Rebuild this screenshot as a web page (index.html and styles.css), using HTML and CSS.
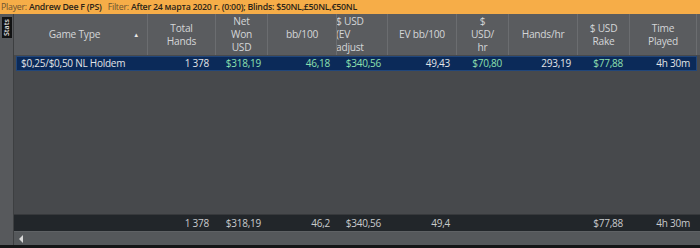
FILE: index.html
```html
<!DOCTYPE html>
<html lang="en">
<head>
    <meta charset="UTF-8">
    <title>Stats</title>
    <link rel="stylesheet" href="styles.css">
</head>
<body>
    <div class="topbar">
        <span class="label">Player:</span> <b>Andrew Dee F (PS)</b>
        <span class="label gap">Filter:</span> <b>After 24 марта 2020 г. (0:00); Blinds: $50NL,£50NL,€50NL</b>
    </div>

    <div class="main">
        <div class="side">
            <div class="tab">Stats</div>
        </div>

        <div class="grid">
            <div class="row head">
                <div class="cell first">Game Type <span class="sort">&#9650;</span></div>
                <div class="cell">Total<br>Hands</div>
                <div class="cell">Net<br>Won<br>USD</div>
                <div class="cell">bb/100</div>
                <div class="cell clip"><span>$ USD<br>(EV<br>adjust</span></div>
                <div class="cell">EV bb/100</div>
                <div class="cell">$<br>USD/<br>hr</div>
                <div class="cell">Hands/hr</div>
                <div class="cell">$ USD<br>Rake</div>
                <div class="cell">Time<br>Played</div>
            </div>

            <div class="body">
                <div class="row data selected">
                    <div class="cell first">$0,25/$0,50 NL Holdem</div>
                    <div class="cell">1 378</div>
                    <div class="cell green">$318,19</div>
                    <div class="cell green">46,18</div>
                    <div class="cell green">$340,56</div>
                    <div class="cell">49,43</div>
                    <div class="cell green">$70,80</div>
                    <div class="cell">293,19</div>
                    <div class="cell green">$77,88</div>
                    <div class="cell">4h 30m</div>
                </div>
            </div>

            <div class="row data total">
                <div class="cell first"></div>
                <div class="cell">1 378</div>
                <div class="cell">$318,19</div>
                <div class="cell">46,2</div>
                <div class="cell">$340,56</div>
                <div class="cell">49,4</div>
                <div class="cell"></div>
                <div class="cell"></div>
                <div class="cell">$77,88</div>
                <div class="cell">4h 30m</div>
            </div>

            <div class="scrollbar">
                <span class="arrow"></span>
            </div>
        </div>
    </div>
    <div class="bottom"></div>
</body>
</html>
```

FILE: styles.css
```css
body {
    margin: 0;
    width: 700px;
    height: 248px;
    overflow: hidden;
    background: #141516;
    font-family: 'Open Sans', sans-serif;
}
.topbar {
    height: 14px;
    line-height: 14px;
    background: #f6ad48;
    color: #2b2418;
    font-size: 8.8px;
    letter-spacing: -0.25px;
    padding-left: 1px;
    white-space: nowrap;
    overflow: hidden;
}
.topbar .label {
    color: #6b5230;
}
.topbar .gap {
    margin-left: 4px;
}
.topbar b {
    font-weight: 600;
}
.main {
    display: flex;
    height: 231px;
}
.side {
    width: 13px;
    background: #57595c;
    border-right: 1px solid #3d3f41;
    padding-top: 3px;
}
.tab {
    width: 10px;
    height: 21px;
    margin-left: 2px;
    background: #111213;
    color: #e6e6e6;
    font-size: 7px;
    font-weight: 600;
    line-height: 10px;
    writing-mode: vertical-rl;
    transform: rotate(180deg);
    text-align: center;
}
.grid {
    flex: 1;
    display: flex;
    flex-direction: column;
    background: #47494c;
}
.row {
    display: grid;
    grid-template-columns: 134px 68px 52px 69px 51px 69px 52px 69px 52px 67px;
}
.head {
    height: 41px;
    background: #5a5c5f;
    color: #d4d6d8;
    font-size: 10.2px;
    letter-spacing: -0.25px;
    line-height: 13px;
}
.head .cell {
    display: flex;
    align-items: center;
    justify-content: center;
    text-align: center;
    border-right: 1px solid #6b6d70;
    overflow: hidden;
}
.head .first {
    position: relative;
    padding-right: 12px;
}
.head .clip {
    justify-content: flex-start;
    text-align: left;
}
.head .clip span {
    margin-left: -1px;
}
.sort {
    position: absolute;
    right: 8px;
    top: 15px;
    font-size: 6px;
    color: #e8e8e8;
}
.body {
    flex: 1;
    padding-top: 1px;
}
.data {
    height: 16px;
    line-height: 16px;
    font-size: 10px;
    letter-spacing: -0.25px;
    color: #e2e4e6;
}
.data .cell {
    text-align: right;
    padding-right: 7px;
    white-space: nowrap;
}
.data .first {
    text-align: left;
    padding-left: 5px;
}
.selected {
    margin-left: 2px;
    width: 681px;
    height: 15px;
    line-height: 15px;
    grid-template-columns: 132px 68px 52px 69px 51px 69px 52px 69px 52px 67px;
    background: #0b2a59;
    box-shadow: inset 0 0 0 1px #21467a;
}
.green {
    color: #8ee0b0;
}
.total {
    background: #22262a;
    color: #c9cbcd;
    border-top: 1px solid #37393c;
}
.scrollbar {
    height: 13px;
    background: #55585b;
    border-top: 1px solid #5f6265;
    display: flex;
    align-items: center;
}
.arrow {
    width: 0;
    height: 0;
    margin-left: 5px;
    border-top: 4px solid transparent;
    border-bottom: 4px solid transparent;
    border-right: 4px solid #d8d8d8;
}
.bottom {
    height: 3px;
    background: #141516;
}
```
